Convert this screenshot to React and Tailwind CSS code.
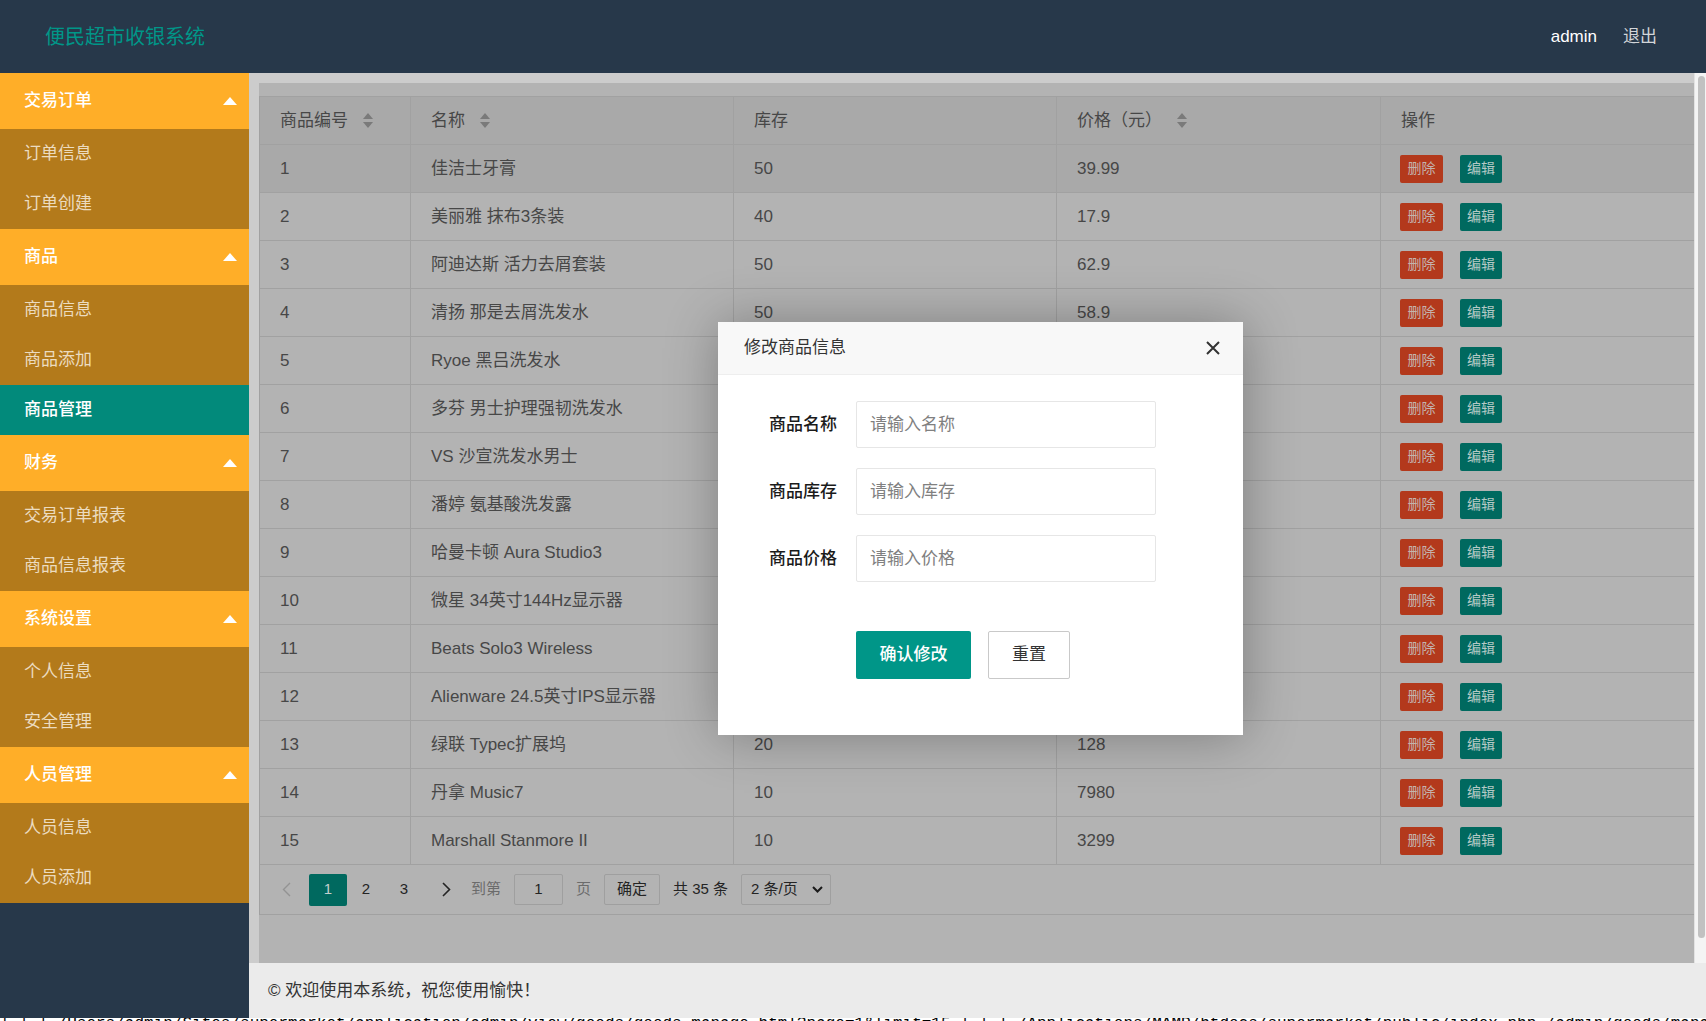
import React from 'react';

const FONT = "font-['Liberation_Sans','Noto_Sans_CJK_SC',sans-serif]";

const MENU = [
  { title: '交易订单', items: ['订单信息', '订单创建'] },
  { title: '商品', items: ['商品信息', '商品添加', '商品管理'] },
  { title: '财务', items: ['交易订单报表', '商品信息报表'] },
  { title: '系统设置', items: ['个人信息', '安全管理'] },
  { title: '人员管理', items: ['人员信息', '人员添加'] },
];

const GOODS = [
  ['1', '佳洁士牙膏', '50', '39.99'],
  ['2', '美丽雅 抹布3条装', '40', '17.9'],
  ['3', '阿迪达斯 活力去屑套装', '50', '62.9'],
  ['4', '清扬 那是去屑洗发水', '50', '58.9'],
  ['5', 'Ryoe 黑吕洗发水', '30', '45.9'],
  ['6', '多芬 男士护理强韧洗发水', '40', '39.9'],
  ['7', 'VS 沙宣洗发水男士', '30', '69.9'],
  ['8', '潘婷 氨基酸洗发露', '50', '49.9'],
  ['9', '哈曼卡顿 Aura Studio3', '10', '2199'],
  ['10', '微星 34英寸144Hz显示器', '10', '2999'],
  ['11', 'Beats Solo3 Wireless', '10', '1699'],
  ['12', 'Alienware 24.5英寸IPS显示器', '10', '3999'],
  ['13', '绿联 Typec扩展坞', '20', '128'],
  ['14', '丹拿 Music7', '10', '7980'],
  ['15', 'Marshall Stanmore II', '10', '3299'],
];

const COLS = 'grid grid-cols-[151px_323px_323px_324px_313px]';

function SortIcon() {
  return (
    <svg width="12" height="15" viewBox="0 0 12 15" className="ml-[14px]">
      <path d="M6 0 L11 6 L1 6 Z" fill="#7a7a7a" />
      <path d="M1 9 L11 9 L6 15 Z" fill="#7a7a7a" />
    </svg>
  );
}

function Sidebar() {
  return (
    <aside className="w-[249px] shrink-0 bg-[#27384a]">
      {MENU.map((group) => (
        <div key={group.title}>
          <div className="h-[56px] bg-[#ffae28] flex items-center justify-between pl-[24px] pr-[12px] text-white text-[17px] font-medium">
            <span>{group.title}</span>
            <svg width="14" height="8" viewBox="0 0 14 8">
              <path d="M7 0 L14 8 L0 8 Z" fill="#fff" />
            </svg>
          </div>
          <div className="bg-[#b37a1b]">
            {group.items.map((item) =>
              item === '商品管理' ? (
                <div key={item} className="h-[50px] bg-[#028a7b] flex items-center pl-[24px] text-white text-[17px] font-medium">
                  {item}
                </div>
              ) : (
                <div key={item} className="h-[50px] flex items-center pl-[24px] text-[#ecdcc0] text-[17px]">
                  {item}
                </div>
              )
            )}
          </div>
        </div>
      ))}
    </aside>
  );
}

function GoodsTable() {
  return (
    <div className="border-l border-[#a1a1a1] text-[17px] text-[#474747]">
      <div className={`${COLS} h-[49px] border-t border-b border-[#a1a1a1] bg-[#a9a9a9]`}>
        <div className="flex items-center pl-[20px] border-r border-[#a1a1a1]">商品编号<SortIcon /></div>
        <div className="flex items-center pl-[20px] border-r border-[#a1a1a1]">名称<SortIcon /></div>
        <div className="flex items-center pl-[20px] border-r border-[#a1a1a1]">库存</div>
        <div className="flex items-center pl-[20px] border-r border-[#a1a1a1]">价格（元）<SortIcon /></div>
        <div className="flex items-center pl-[20px]">操作</div>
      </div>
      {GOODS.map((row, i) => (
        <div key={row[0]} className={`${COLS} h-[48px] border-b border-[#a1a1a1] ${i === 0 ? 'bg-[#a9a9a9]' : ''}`}>
          <div className="flex items-center pl-[20px] border-r border-[#a1a1a1]">{row[0]}</div>
          <div className="flex items-center pl-[20px] border-r border-[#a1a1a1]">{row[1]}</div>
          <div className="flex items-center pl-[20px] border-r border-[#a1a1a1]">{row[2]}</div>
          <div className="flex items-center pl-[20px] border-r border-[#a1a1a1]">{row[3]}</div>
          <div className="flex items-center pl-[19px] gap-[17px]">
            <span className="w-[43px] h-[28px] rounded-[2px] bg-[#b3391c] text-[#c4b3ae] text-[14px] flex items-center justify-center">删除</span>
            <span className="w-[42px] h-[28px] rounded-[2px] bg-[#00695f] text-[#b4c9c5] text-[14px] flex items-center justify-center">编辑</span>
          </div>
        </div>
      ))}
      <div className="h-[50px] border-b border-[#a1a1a1] flex items-center text-[15px] text-[#242424]">
        <svg width="9" height="15" viewBox="0 0 9 15" className="ml-[22px]">
          <path d="M8 1 L1.5 7.5 L8 14" fill="none" stroke="#939393" strokeWidth="1.4" />
        </svg>
        <span className="ml-[18px] w-[38px] h-[32px] rounded-[2px] bg-[#00695f] text-[#c2cfcd] flex items-center justify-center">1</span>
        <span className="w-[38px] h-[32px] flex items-center justify-center">2</span>
        <span className="w-[38px] h-[32px] flex items-center justify-center">3</span>
        <span className="ml-[4px] w-[38px] h-[32px] flex items-center justify-center">
          <svg width="9" height="15" viewBox="0 0 9 15">
            <path d="M1 1 L7.5 7.5 L1 14" fill="none" stroke="#242424" strokeWidth="1.6" />
          </svg>
        </span>
        <span className="ml-[6px] text-[#6b6b6b]">到第</span>
        <span className="ml-[13px] w-[49px] h-[31px] border border-[#9f9f9f] rounded-[2px] flex items-center justify-center">1</span>
        <span className="ml-[13px] text-[#6b6b6b]">页</span>
        <span className="ml-[13px] w-[56px] h-[31px] border border-[#9f9f9f] rounded-[2px] flex items-center justify-center">确定</span>
        <span className="ml-[13px]">共 35 条</span>
        <span className="ml-[13px] w-[90px] h-[31px] border border-[#9f9f9f] rounded-[2px] flex items-center justify-between pl-[9px] pr-[7px]">
          2 条/页
          <svg width="11" height="7" viewBox="0 0 11 7">
            <path d="M1 1 L5.5 5.5 L10 1" fill="none" stroke="#1a1a1a" strokeWidth="2" />
          </svg>
        </span>
      </div>
    </div>
  );
}

function EditModal() {
  const fields = [
    ['商品名称', '请输入名称'],
    ['商品库存', '请输入库存'],
    ['商品价格', '请输入价格'],
  ];
  return (
    <div className="absolute left-[718px] top-[322px] w-[525px] h-[413px] bg-white shadow-[1px_1px_50px_rgba(0,0,0,0.3)] flex flex-col">
      <div className="h-[53px] shrink-0 bg-[#f8f8f8] border-b border-[#eeeeee] flex items-center justify-between pl-[26px] pr-[22px]">
        <span className="text-[17px] text-[#333]">修改商品信息</span>
        <svg width="16" height="16" viewBox="0 0 16 16">
          <path d="M2 2 L14 14 M14 2 L2 14" stroke="#333" strokeWidth="2" />
        </svg>
      </div>
      <div className="pt-[26px] flex flex-col gap-[20px]">
        {fields.map(([label, ph]) => (
          <div key={label} className="flex items-center">
            <label className="w-[138px] text-right pr-[19px] text-[17px] text-[#1a1a1a] font-medium">{label}</label>
            <input
              placeholder={ph}
              className="w-[300px] h-[47px] border border-[#e6e6e6] rounded-[2px] px-[13px] text-[17px] outline-none placeholder:text-[#808080]"
            />
          </div>
        ))}
        <div className="flex mt-[29px] pl-[138px] gap-[17px]">
          <button className="w-[115px] h-[48px] rounded-[2px] bg-[#009688] text-white text-[17px] font-medium">确认修改</button>
          <button className="w-[82px] h-[48px] rounded-[2px] bg-white border border-[#c9c9c9] text-[#333] text-[17px]">重置</button>
        </div>
      </div>
    </div>
  );
}

export default function App() {
  return (
    <div className={`${FONT} relative w-[1706px] h-[1021px] overflow-hidden flex flex-col bg-white`}>
      <header className="h-[73px] shrink-0 bg-[#27384a] flex items-center justify-between pl-[45px] pr-[49px]">
        <span className="text-[20px] text-[#009688]">便民超市收银系统</span>
        <div className="flex items-center gap-[26px] text-[17px]">
          <span className="text-white">admin</span>
          <span className="text-[#d2d5d9]">退出</span>
        </div>
      </header>

      <div className="flex flex-1 min-h-0">
        <Sidebar />
        <main className="flex-1 flex flex-col">
          <div className="h-[890px] shrink-0 flex">
            <div className="flex-1 bg-[#cccccc] pl-[10px] pt-[10px] flex">
              <div className="flex-1 bg-[#b3b3b3] pt-[13px]">
                <GoodsTable />
              </div>
            </div>
            <div className="w-[13px] bg-[#f4f4f4] border-l border-[#e2e2e2] pt-[3px] flex justify-center">
              <div className="w-[7px] h-[862px] rounded-full bg-[#c1c1c1]" />
            </div>
          </div>
          <footer className="flex-1 bg-[#ebebeb] flex items-center pl-[19px] text-[17px] text-[#333]">
            © 欢迎使用本系统，祝您使用愉快！
          </footer>
        </main>
      </div>

      <div className="h-[3px] shrink-0 overflow-hidden bg-white font-['Liberation_Mono',monospace] text-[16px] leading-[14px] text-black whitespace-nowrap">
        <div className="-mt-[1px]">| | | /Users/admin/Sites/supermarket/application/admin/view/goods/goods_manage.html?page=1&amp;limit=15 | | | /Applications/MAMP/htdocs/supermarket/public/index.php /admin/goods/manage</div>
      </div>

      <EditModal />
    </div>
  );
}
